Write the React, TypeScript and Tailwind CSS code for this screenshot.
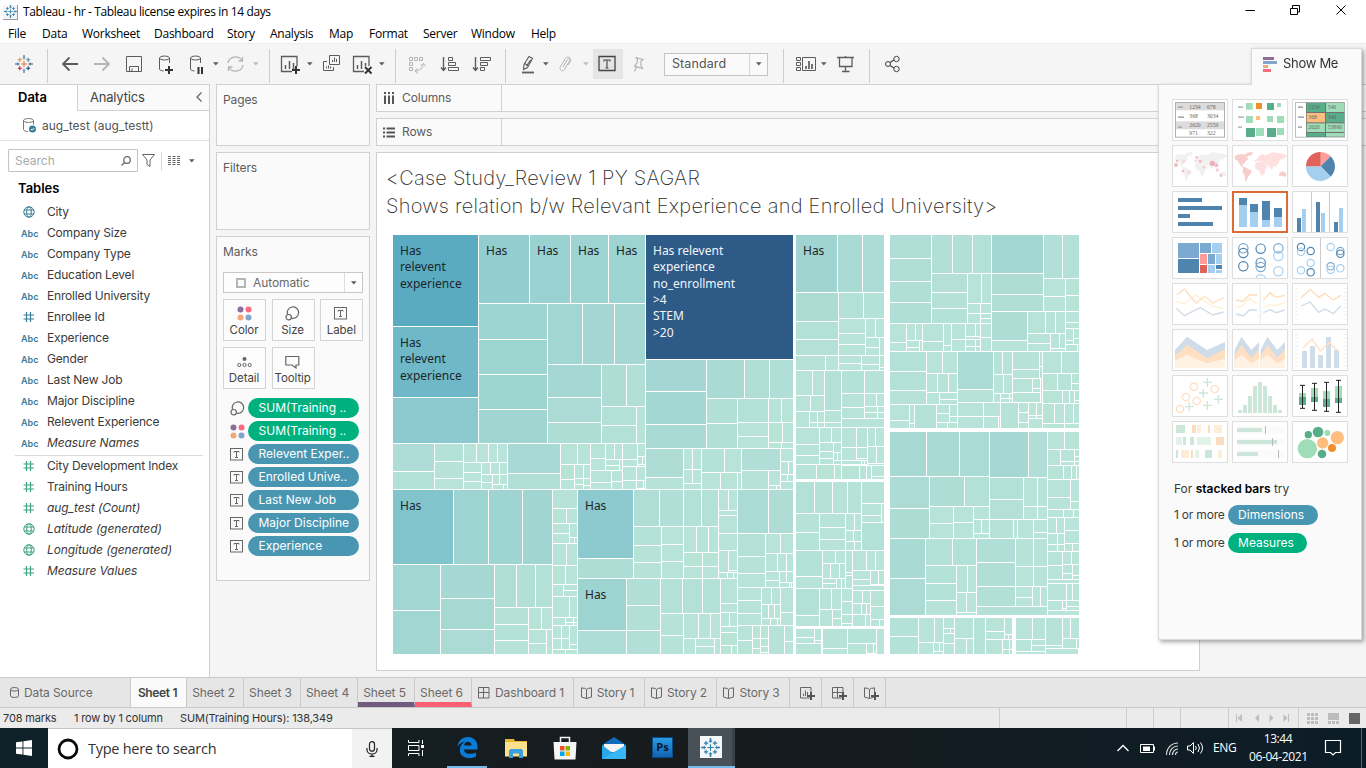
import React from "react";

/* ---------- treemap geometry: "h y0 y1 x..." is a row of cells, "v x0 x1 y..." a column ---------- */
const CELLS = `v 393 479 235 327 398 444;h 235 304 479 530 571 609 646;v 479 548 304 340 375 410 444;h 304 365 548 583 615 646;v 548 602 365 398 423 444;h 365 407 602 627 646;v 602 637 407 426 444;v 637 646 407 444
v 393 435 444 472 490;v 435 464 444 462 479 490;h 444 463 464 477 489 498 508;v 464 482 463 473 482 490;h 463 475 482 491 500 508;v 482 493 475 483 490;h 475 485 493 500 508;h 485 490 493 504 508
v 508 561 444 474 490;h 444 465 561 578 591;v 561 575 465 480 490;v 575 584 465 479 485 490;v 584 591 465 479 486 490;v 591 606 444 459 471;v 591 612 471 483 490;v 612 623 471 482 490
h 444 460 606 615 623;v 606 620 460 466 471;v 620 623 460 471;v 623 638 444 460 467;v 623 637 467 481 490;v 638 646 444 457;h 457 465 638 643 646;v 638 646 465 467;v 637 646 467 481;h 481 489 637 644 646
h 490 565 393 454 489 523 553;v 393 441 565 611 655;v 441 495 565 599 630 655;h 565 608 495 517 536 553;v 495 529 608 625 641 655;h 608 630 529 542 553;v 529 547 630 644 655;v 547 553 630 655
v 553 578 490 509;h 509 524 553 567 578;v 553 570 524 534 544;v 570 578 524 538;h 538 544 570 575 578;h 544 566 553 567 578;h 566 585 553 566 578;v 553 564 585 597;v 564 578 585 591 597;h 597 618 553 570 578
v 553 566 618 626;v 566 574 618 623 626;v 574 578 618 623 626;h 626 639 553 562 570;h 639 650 553 562 570;v 570 578 626 645 650;h 650 655 553 566 578
v 578 634 490 559 579;h 490 527 634 660 684;v 634 662 527 546 563 579;v 662 684 527 545 562 579;v 578 627 579 631 655;v 627 661 579 606 631 655
h 490 527 684 702 719;h 490 511 719 729 738;v 719 738 511 516 534 551;h 527 553 684 697 709 719;v 684 703 553 567 579;v 703 719 553 567 579;v 719 729 551 573;v 729 738 551 571 573;h 573 579 719 728 734 738
h 490 534 738 769 794;v 738 766 534 557 574 588;h 534 554 766 781 794;h 554 572 766 778 787 794;v 766 780 572 581 588;h 572 583 780 787 794;h 583 588 780 790 792 794
h 579 614 661 683 703 721;v 661 684 614 636 655;h 614 639 684 699 711 721;v 684 696 639 655;v 696 715 639 647 655;v 715 721 639 655;v 721 738 579 604 613;h 613 627 721 730 738;v 721 738 627 633 646;h 646 655 721 732 738
v 738 762 588 601 614 626;h 588 605 762 772 781;h 605 619 762 769 775 781;h 619 626 762 771 778 781;v 781 794 588 613 626;v 738 753 626 641 655;h 626 639 753 761 769;v 753 761 639 649 655;v 761 769 639 647 653 655;v 769 785 626 655;v 785 794 626 642 655
v 646 794 235 360;v 646 707 360 392 425 449;h 360 399 707 745 770 794;v 707 738 399 424 449;v 738 769 399 423 437 449;h 399 423 769 782 794;h 423 443 769 783 794;h 443 449 769 782 794
v 646 684 449 478 490;h 449 470 684 693 702;h 470 484 684 693 702;v 684 702 484 490;h 449 473 702 725 742;h 473 490 702 721 738 742;v 742 781 449 471;v 742 769 471 490;v 769 781 471 486;h 486 490 769 777 781;v 781 794 449 462;h 462 475 781 789 794;h 475 482 781 788 794;v 781 794 482 490
h 235 293 796 838 863 885;v 796 839 293 322 340 356;h 293 319 839 864 885;v 839 866 319 334 345 356;h 319 338 866 876 885;v 866 880 338 348 356;v 880 885 338 356;h 356 371 796 826 839;v 839 862 356 364 371;v 862 880 356 365 371;v 880 885 356 368 371
h 371 396 796 813 825;h 396 412 796 811 825;v 796 810 412 428;h 412 423 810 818 825;h 423 428 810 818 825;v 825 842 371 411 423 428;h 371 394 842 865 885;v 842 865 394 408 419;h 394 407 865 877 885;h 407 413 865 878 885;h 413 419 865 878 885;v 842 885 419 428
v 796 820 428 445 456 465;h 428 443 820 832 842;v 820 834 443 452 459 465;v 834 842 443 453;h 453 461 834 838 842;v 834 842 461 465;h 428 448 842 857 868;v 842 857 448 461;v 857 868 448 459 461;h 461 465 842 862 865 868;h 428 447 868 876 885;h 447 464 868 877 885;v 868 885 464 466
h 465 480 796 817 835 842;h 466 480 842 860 867 872;v 872 885 466 477 480
h 482 514 796 815 833 848 862;v 862 885 482 504;v 862 882 504 516 523;v 882 885 504 523;v 862 885 523 551;v 796 820 514 533 551;v 820 846 514 528 540 551;h 514 531 846 855 862;h 531 542 846 854 862;h 542 551 846 855 862
v 796 823 551 577 589;h 551 564 823 836 846;h 564 579 823 831 840 846;v 823 837 579 584 589;h 579 589 837 842 846;v 846 853 551 573 576 589;h 551 571 853 867 876 885;v 853 871 571 580 586;h 571 585 871 879 885;v 853 885 586 591
v 796 820 589 616 627;h 589 610 820 832 842;v 820 833 610 627;v 833 842 610 619 627;v 842 853 589 602 615 624 627;h 591 604 853 863 871;h 604 615 853 862 867 871;h 615 627 853 866 871;v 871 885 591 607 620;h 620 627 871 880 885
v 796 815 629 638 644;v 815 822 629 641 644;v 796 822 644 655;v 823 848 629 649 655;v 848 877 629 644;v 848 867 644 655;h 644 654 867 874 877;v 877 885 629 655
v 890 932 235 259 282 303 324;h 235 274 932 953 973 992;v 932 968 274 293 309 324;h 274 304 968 982 992;v 968 981 304 314 324;v 981 992 304 314 319 324;v 992 1044 235 274 295 312;h 235 279 1044 1063 1080;v 1044 1066 279 297 312;v 1066 1080 279 296 312
v 992 1028 312 341 352;h 312 334 1028 1046 1056 1066;v 1028 1051 334 344 352;h 334 349 1051 1060 1066;v 1051 1066 349 352;v 1066 1080 312 323 329;v 1066 1074 329 341 345;v 1074 1080 329 339 345;h 345 352 1066 1078 1080
v 890 907 324 343 352;h 324 341 907 916 923;v 907 920 341 348 352;v 920 923 341 352;v 923 944 324 342 352;v 944 952 324 346 352;v 952 966 324 340 352;h 324 337 966 976 981;v 966 981 337 340;h 340 347 966 976 981;h 347 352 966 976 981;v 981 992 324 338 352
v 890 927 352 372 391 405;h 352 374 927 943 958;h 374 393 927 938 949 958;v 927 940 393 405;v 940 958 393 400 405;v 890 910 405 421 429;v 910 915 405 424 429;v 915 937 405 429;v 937 950 405 414 423;v 950 958 405 417 423;h 423 429 937 948 958
v 958 994 352 390 403;h 352 375 994 1003 1013;h 375 394 994 1004 1013;v 994 1001 394 403;v 1001 1010 394 399 403;v 1010 1013 394 399 403;v 1013 1040 352 370 379;v 1040 1043 352 367 379;v 1013 1033 379 393;v 1033 1041 379 389 393;v 1013 1041 393 403;v 1041 1043 379 403
v 958 984 403 417 429;v 984 1001 403 417;h 417 429 984 999 1001;v 1001 1019 403 429;v 1019 1029 403 413 423 429;h 403 416 1029 1037 1043;h 416 419 1029 1037 1043;v 1029 1043 419 429
h 352 374 1043 1062 1080;h 374 391 1043 1058 1072;v 1072 1080 374 384 391;h 391 404 1043 1063 1070 1075;v 1075 1080 391 401 404;h 404 424 1043 1055 1065 1074 1080;h 424 429 1043 1065 1080
h 432 477 890 927 960 990;h 432 478 990 1029 1048;v 890 930 477 509 539;h 477 507 930 965 990;v 930 954 507 524 539;v 954 974 507 523 539;v 974 990 507 520;h 520 534 974 982 990;v 974 990 534 539
v 990 1024 478 500 520;h 478 507 1024 1038 1048;h 507 520 1024 1038 1048;h 520 539 990 1014 1018 1034;v 1034 1048 520 533 539;v 890 926 539 579 616;h 539 566 926 953 977;v 926 957 566 584 601 616;h 566 593 957 968 977;h 593 613 957 967 977;v 957 977 613 616
v 977 1016 539 563 587 607;h 539 567 1016 1034 1048;h 567 587 1016 1034 1048;v 1016 1033 587 598 607;h 587 607 1033 1041 1048;v 977 1048 607 616
h 432 450 1048 1065 1080;v 1048 1061 450 466;v 1061 1075 450 462 466;v 1075 1080 450 457 462 466;h 466 480 1048 1064 1072 1077 1080;v 1048 1071 480 498 510;v 1071 1080 480 502 510;h 510 518 1048 1064 1074 1080;h 518 534 1048 1057 1065;h 534 545 1048 1058 1065;h 545 552 1048 1058 1065;v 1065 1080 518 531 544;h 544 552 1065 1073 1080
v 1048 1063 552 566 580;h 552 565 1063 1072 1080;v 1063 1073 565 574 580;v 1073 1080 565 576 580;v 1048 1080 580 584;h 584 601 1048 1067 1073 1080;v 1048 1063 601 611;v 1063 1067 601 609 611;v 1067 1080 601 607 611;v 1048 1080 611 616
v 890 919 618 637 655;h 618 643 919 935 944;v 919 934 643 655;h 643 652 934 940 944;v 934 944 652 655;v 944 955 618 629;h 629 634 944 951 955;v 944 955 634 644 655;v 955 974 618 639;h 639 655 955 967 974;v 974 986 618 655;v 986 1005 618 632 640;v 986 1003 640 655;v 1005 1013 618 635;h 635 640 1005 1009 1013;h 640 650 1003 1010 1013;h 650 655 1003 1010 1013
h 618 640 1016 1033 1046;v 1016 1032 640 652;v 1032 1046 640 646 652;v 1016 1046 652 655;v 1046 1063 618 646 649;h 618 639 1063 1071 1080;h 639 649 1063 1077 1080;v 1046 1079 649 655`;

const STOPS: [number, number[]][] = [
  [0, [185, 229, 217]],
  [350, [183, 227, 216]],
  [1000, [175, 221, 214]],
  [1700, [166, 216, 211]],
  [2400, [158, 212, 209]],
  [3400, [147, 205, 208]],
  [4500, [129, 195, 204]],
  [5900, [112, 184, 199]],
  [7700, [90, 171, 193]],
  [18400, [45, 89, 134]],
];

function shade(area: number) {
  let i = 1;
  while (i < STOPS.length - 1 && area > STOPS[i][0]) i++;
  const [a0, c0] = STOPS[i - 1];
  const [a1, c1] = STOPS[i];
  const t = Math.min(1, (area - a0) / (a1 - a0));
  return `rgb(${c0.map((c, k) => Math.round(c + (c1[k] - c) * t)).join(",")})`;
}

type Cell = { x: number; y: number; w: number; h: number };
const cells: Cell[] = CELLS.split(/[;\n]/).flatMap((line) => {
  const [kind, ...rest] = line.trim().split(" ");
  const [a, b, ...e] = rest.map(Number);
  return e.slice(1).map((end, i) =>
    kind === "h"
      ? { x: e[i], y: a, w: end - e[i] - 1, h: b - a - 1 }
      : { x: a, y: e[i], w: b - a - 1, h: end - e[i] - 1 }
  );
});

const LABELS: { x: number; y: number; lines: string[]; light?: boolean }[] = [
  { x: 400, y: 255, lines: ["Has", "relevent", "experience"] },
  { x: 400, y: 347, lines: ["Has", "relevent", "experience"] },
  { x: 486, y: 255, lines: ["Has"] },
  { x: 537, y: 255, lines: ["Has"] },
  { x: 578, y: 255, lines: ["Has"] },
  { x: 616, y: 255, lines: ["Has"] },
  { x: 803, y: 255, lines: ["Has"] },
  { x: 400, y: 510, lines: ["Has"] },
  { x: 585, y: 510, lines: ["Has"] },
  { x: 585, y: 599, lines: ["Has"] },
  { x: 653, y: 255, lines: ["Has relevent", "experience", "no_enrollment", ">4", "STEM", ">20"], light: true },
];

function Treemap() {
  return (
    <svg width="688" height="420" viewBox="393 235 688 420" className="ml-4 block shrink-0">
      <g shapeRendering="crispEdges">
        {cells.map((c, i) => (
          <rect key={i} x={c.x} y={c.y} width={c.w} height={c.h} fill={shade(c.w * c.h)} />
        ))}
      </g>
      {LABELS.map((l, i) =>
        l.lines.map((t, k) => (
          <text key={`${i}-${k}`} x={l.x} y={l.y + Math.round(k * 16.3)} fill={l.light ? "#f2f5f8" : "#1c2628"} className="font-['Noto_Sans',sans-serif] text-[12px]">
            {t}
          </text>
        ))
      )}
    </svg>
  );
}

/* ---------- icons ---------- */
type IcoProps = { x: number; y?: number; w: number; h?: number; className?: string; c?: string; children?: React.ReactNode };
function Ico({ x, y = 54, w, h = 20, className = "", c = "#5c5c5c", children }: IcoProps) {
  return (
    <svg width={w} height={h} viewBox={`${x} ${y} ${w} ${h}`} fill="none" stroke={c} className={`shrink-0 overflow-visible ${className}`}>
      {children}
    </svg>
  );
}
const Caret = ({ className = "", c = "#5c5c5c" }: { className?: string; c?: string }) => (
  <svg width="6" height="4" viewBox="0 0 6 4" className={`shrink-0 ${className}`}>
    <path d="M0 .3h5.600L2.800 3.600z" fill={c} />
  </svg>
);
const Sep = ({ className = "" }: { className?: string }) => <div className={`mt-1 h-[34px] w-px shrink-0 bg-[#cdcdcd] ${className}`} />;

const Hash = ({ c }: { c: string }) => (
  <svg width="12" height="12" viewBox="0 0 12 12" stroke={c} strokeWidth="1.2"><path d="M3.5 1v10M7.5 1v10M.5 4h10.500M.5 8h10.500" /></svg>
);
const Globe = ({ c }: { c: string }) => (
  <svg width="12" height="12" viewBox="0 0 12 12" stroke={c} fill="none"><circle cx="6" cy="6" r="5.200" /><ellipse cx="6" cy="6" rx="2.300" ry="5.200" /><path d="M1 4h10M1 8h10" /></svg>
);
const TBox = () => (
  <svg width="14" height="13" viewBox="0 0 14 13" fill="none" stroke="#666"><rect x=".5" y=".5" width="12" height="11.500" /><path d="M4 4.500V3.500h5v1M6.500 3.500v5.500M5 9.500h3" /></svg>
);
const SizeIco = () => (
  <svg width="15" height="15" viewBox="0 0 15 15" fill="none" stroke="#666" strokeWidth="1.200"><path d="M2.600 8.500A5.700 5.700 0 1 1 7 12.200" /><circle cx="3.700" cy="11.200" r="2.700" /></svg>
);
const Dots = () => (
  <svg width="15" height="15" viewBox="0 0 15 15"><circle cx="3.500" cy="3.500" r="3" fill="#8a6d98" /><circle cx="11.500" cy="3.500" r="3" fill="#f96b80" /><circle cx="3.500" cy="11.500" r="3" fill="#f3a87c" /><circle cx="11.500" cy="11.500" r="3" fill="#83a5cd" /></svg>
);

function TableauMark({ size, mono }: { size: number; mono?: boolean }) {
  const pts: [number, number, number, string][] = [
    [9, 9, 3, "#e8762d"], [9, 3, 1.6, "#7199a6"], [9, 15, 1.6, "#7199c6"], [3, 9, 1.6, "#5b6591"], [15, 9, 1.6, "#5b6591"],
    [4.8, 4.8, 2, "#eb912b"], [13.2, 4.8, 2, "#59879b"], [4.8, 13.2, 2, "#c72035"], [13.2, 13.2, 2, "#1f447e"],
    [9, 1, 0.9, "#5b87b6"], [9, 17, 0.9, "#5b87b6"], [1, 9, 0.9, "#5b87b6"], [17, 9, 0.9, "#5b87b6"],
  ];
  return (
    <svg width={size} height={size} viewBox="0 0 18 18" className="shrink-0">
      {pts.map(([x, y, r, c], i) => (
        <path key={i} d={`M${x - r} ${y}h${2 * r}M${x} ${y - r}v${2 * r}`} stroke={mono ? "#2f7fad" : c} strokeWidth="1.100" />
      ))}
    </svg>
  );
}

const Db = ({ x }: { x: number }) => (
  <>
    <ellipse cx={x + 5.5} cy={58} rx={5} ry={2} />
    <path d={`M${x + 0.5} 58v11c0 1 1.500 1.800 4 2M${x + 10.5} 58v5`} />
  </>
);

const MENU = [
  ["File", "w-[34px]"], ["Data", "w-[40px]"], ["Worksheet", "w-[72px]"], ["Dashboard", "w-[73px]"], ["Story", "w-[43px]"], ["Analysis", "w-[59px]"],
  ["Map", "w-[40px]"], ["Format", "w-[54px]"], ["Server", "w-[48px]"], ["Window", "w-[60px]"], ["Help", "w-[40px]"],
];

function TitleAndMenu() {
  return (
    <header className="h-[43px] shrink-0 bg-white font-['Open_Sans','Noto_Sans',sans-serif] text-black">
      <div className="flex h-6 items-center pl-[3px]">
        <div className="flex size-[15px] items-center justify-center border-r border-b border-[#999] bg-[#f4f4f4]"><TableauMark size={13} mono /></div>
        <span className="ml-[5px] text-[12px] tracking-[-0.37px]">Tableau - hr - Tableau license expires in 14 days</span>
        <svg width="112" height="12" viewBox="1240 4 112 12" fill="none" stroke="#000" className="mr-[14px] -mt-1 ml-auto">
          <path d="M1245.500 10.500h9.500M1290.500 8.500h7v6h-7zM1292.500 8v-2.500h7v6.500h-2M1336.500 5.500l9 9M1345.500 5.500l-9 9" />
        </svg>
      </div>
      <nav className="flex pl-2 text-[12px] leading-5 tracking-[-0.25px]">
        {MENU.map(([m, w]) => <span key={m} className={`${w} whitespace-nowrap`}>{m}</span>)}
      </nav>
    </header>
  );
}

function Toolbar() {
  return (
    <div className="flex h-[41px] shrink-0 items-center border-t border-[#ececec] bg-[#f5f5f5] pl-[15px]">
      <TableauMark size={18} />
      <Sep className="ml-[14px]" />
      <Ico x={62} w={16} className="ml-[14px]"><path d="M78 64H63M69.500 57.500L63 64l6.500 6.500" strokeWidth="1.800" /></Ico>
      <Ico x={94} w={16} className="ml-4" c="#b4b4b4"><path d="M94 64h15M102.500 57.500L109 64l-6.500 6.500" strokeWidth="1.800" /></Ico>
      <Ico x={126} w={16} className="ml-4"><path d="M126.500 56.500h15v15h-15zM129.500 71v-4.500h9V71M132 68.500v3" /></Ico>
      <Ico x={159} w={14} className="ml-[17px]"><Db x={159} /><path d="M169 66v8M165 70h8" stroke="#333" strokeWidth="2" /></Ico>
      <Ico x={190} w={13} className="ml-[17px]"><Db x={190} /><path d="M198.500 67v7M202 67v7" stroke="#333" strokeWidth="2" /></Ico>
      <Caret className="ml-[10px]" />
      <Ico x={227} w={17} className="ml-2" c="#b4b4b4"><path d="M228 63a7.500 7 0 0 1 14-2.500M243 65a7.500 7 0 0 1-14 2.500M242.500 57v4h-4M228.500 71v-4h4" strokeWidth="1.300" /></Ico>
      <Caret className="ml-[9px]" c="#bbb" />
      <Sep className="ml-[10px]" />
      <Ico x={281} w={19} className="ml-[11px]"><path d="M297 66v-9.500h-15.500v15h10.500" strokeWidth="1.300" /><path d="M285.500 65v4M289.500 61v8M293.500 63v6" strokeWidth="1.500" /><path d="M296 66v8M292 70h8" stroke="#333" strokeWidth="2" /></Ico>
      <Caret className="ml-[7px]" />
      <Ico x={323} w={17} className="ml-[10px]"><path d="M329.500 55.500h10v9h-10zM327 61.500h-3.500v9h10V67M332.500 62v-2M334.500 62v-4.500M336.500 62v-3M326.500 68.500v-2M328.500 68.500v-3M330.500 68.500v-2" /></Ico>
      <Ico x={353} w={19} className="ml-[13px]"><path d="M369 66v-9.500h-15.500v15h10.500" strokeWidth="1.300" /><path d="M357.500 65v4M361.500 61v8M365.500 63v3" strokeWidth="1.500" /><path d="M365 67l6.500 6.500M371.500 67l-6.500 6.500" stroke="#333" strokeWidth="2" /></Ico>
      <Caret className="ml-[7px]" />
      <Sep className="ml-[10px]" />
      <Ico x={409} w={17} className="ml-[13px]" c="#b4b4b4"><path d="M409.500 57.500h3v3h-3zM414.500 57.500h3v3h-3zM419.500 57.500h3v3h-3zM409.500 62.500h3v3h-3zM409.500 67.500h3v3h-3zM415 71c5 0 8-3 8-7M420.500 66l2.500-2.500 3 2.500M418 68.500l-3 2.500 3 2.500" /></Ico>
      <Ico x={441} w={18} className="ml-[15px]"><path d="M443.500 57v13M441 67.500l2.500 3 2.500-3" strokeWidth="1.400" /><path d="M448.500 57.500h4v3h-4zM448.500 62.500h7v3h-7zM448.500 67.500h10v3h-10z" /></Ico>
      <Ico x={473} w={18} className="ml-[14px]"><path d="M475.500 57v13M473 67.500l2.500 3 2.500-3" strokeWidth="1.400" /><path d="M480.500 57.500h10v3h-10zM480.500 62.500h7v3h-7zM480.500 67.500h4v3h-4z" /></Ico>
      <Sep className="ml-[14px]" />
      <Ico x={521} w={14} className="ml-[15px]"><path d="M529 56.500l3.500 2-5 9-4 2 .5-5zM524.500 63.500l3.500 2M530.500 60l-4 6" strokeWidth="1.100" /><path d="M522 72.500h12" strokeWidth="1.800" /></Ico>
      <Caret className="ml-[8px]" />
      <Ico x={559} w={13} className="ml-[10px]" c="#b4b4b4"><path d="M563 67l4.500-7.500c1-1.500 3 0 2 1.500l-5 8.500c-1.500 2.500-6 .5-4-3l5-8c2-3 6.500-.5 5 2.500l-2.500 4" /></Ico>
      <Caret className="ml-[11px]" c="#bbb" />
      <div className="ml-1 flex size-[30px] items-center justify-center bg-[#e5e5e5]">
        <Ico x={600} w={18}><path d="M600 56.500h16v14h-16z" stroke="#444" strokeWidth="1.300" /><path d="M605 61.500v-1.500h6v1.500M608 60v8M606.500 68h3" stroke="#444" strokeWidth="1.100" /></Ico>
      </div>
      <Ico x={632} w={12} className="ml-[9px]" c="#b4b4b4"><path d="M635.500 57.500l7.500 2-2 1.500v4.500l1.500 3-8-2.500 2.500-3 .5-4zM636.500 66.500l-2 5" strokeWidth="1.200" /></Ico>
      <div className="ml-[20px] flex h-[23px] w-[104px] items-center border border-[#c4c4c4] bg-[#fafafa] pl-[7px] text-[12.500px] tracking-[0.1px] text-[#555]">
        <span className="w-[77px]">Standard</span>
        <div className="flex h-full flex-1 items-center justify-center border-l border-[#d4d4d4]"><Caret /></div>
      </div>
      <Sep className="ml-[15px]" />
      <Ico x={796} w={20} className="ml-3"><path d="M796.500 57.500h4v3h-4zM796.500 62.500h4v3h-4zM796.500 67.500h4v3h-4zM802.500 57.500h13v13h-13z" /><path d="M806 66v3M809 61v8M812 64v5" strokeWidth="1.700" /></Ico>
      <Caret className="ml-[5px]" />
      <Ico x={837} w={17} className="ml-[10px]"><path d="M837 57.500h17M839.500 57.500v9h12.500v-9M845.500 56v2M845.500 66.500v5M842 71.500h7.500" strokeWidth="1.300" /></Ico>
      <Sep className="ml-[15px]" />
      <Ico x={885} w={15} className="ml-[15px]" c="#444"><circle cx="888" cy="64" r="2.500" /><circle cx="896.500" cy="59" r="2.700" /><circle cx="896.500" cy="69" r="2.700" /><path d="M890 62.500l4-2.500M890 65.500l4 2.500" strokeWidth="1.300" /></Ico>
    </div>
  );
}

const DIMS: [string, string][] = [
  ["globe", "City"], ["abc", "Company Size"], ["abc", "Company Type"], ["abc", "Education Level"], ["abc", "Enrolled University"], ["hash", "Enrollee Id"],
  ["abc", "Experience"], ["abc", "Gender"], ["abc", "Last New Job"], ["abc", "Major Discipline"], ["abc", "Relevent Experience"], ["abc", "Measure Names"],
];
const MEAS: [string, string][] = [
  ["hash", "City Development Index"], ["hash", "Training Hours"], ["hash", "aug_test (Count)"], ["globe", "Latitude (generated)"], ["globe", "Longitude (generated)"], ["hash", "Measure Values"],
];

function Field({ kind, label, c, italic }: { kind: string; label: string; c: string; italic?: boolean }) {
  return (
    <div className="flex h-[21px] shrink-0 items-center pl-[21px] text-[12px] text-[#3a3a3a]">
      <div className="flex w-[26px] items-center">
        {kind === "abc" ? <span className="mt-0.5 text-[9px] font-semibold text-[#3b7c99]">Abc</span> : <span className="ml-0.5">{kind === "hash" ? <Hash c={c} /> : <Globe c={c} />}</span>}
      </div>
      <span className={italic ? "tracking-[-0.08px] italic" : "tracking-[-0.18px]"}>{label}</span>
    </div>
  );
}

function DataPane() {
  return (
    <aside className="flex w-[210px] shrink-0 flex-col border-t border-r border-[#d0d0d0] bg-white">
      <div className="flex h-[26px] shrink-0">
        <div className="w-[77px] pt-[3px] pl-[18px] text-[13px] font-semibold text-black">Data</div>
        <div className="flex flex-1 justify-between border-b border-l border-[#d0d0d0] bg-[#fafafa] pt-[3px] pr-[7px] pl-3 text-[13px] tracking-[-0.2px] text-[#444]">
          Analytics
          <svg width="6" height="10" viewBox="0 0 6 10" fill="none" stroke="#666" strokeWidth="1.300" className="mt-[4px]"><path d="M5.500 .5L1 5l4.500 4.500" /></svg>
        </div>
      </div>
      <div className="flex h-[30px] shrink-0 items-center border-b border-[#e0e0e0] pl-[23px] text-[12px] text-[#555]">
        <svg width="14" height="15" viewBox="0 0 14 15" fill="none" stroke="#777"><ellipse cx="5.500" cy="2.500" rx="5" ry="2" /><path d="M.5 2.500v9c0 1 2 2 4.500 2M10.500 2.500v4" /><circle cx="9.500" cy="11" r="3.500" fill="#3b7c99" stroke="none" /><path d="M8 11l1.200 1.200L11.300 10" stroke="#fff" /></svg>
        <span className="ml-[5px] tracking-[0.02px]">aug_test (aug_testt)</span>
      </div>
      <div className="mt-2 flex shrink-0 items-center pl-2">
        <div className="flex h-[23px] w-[130px] items-center justify-between rounded-[1px] border border-[#c4c4c4] pr-[6px] pl-[6px] text-[12px] text-[#aaa]">
          Search
          <svg width="10" height="10" viewBox="0 0 10 10" fill="none" stroke="#666" strokeWidth="1.200"><circle cx="6" cy="4" r="3.300" /><path d="M3.500 6.500L.5 9.500" /></svg>
        </div>
        <svg width="13" height="13" viewBox="0 0 13 13" fill="none" stroke="#666" className="ml-[4px]"><path d="M.5 .5h12L8 6v6.500l-3-2V6z" /></svg>
        <div className="ml-[6px] h-[18px] w-px bg-[#d4d4d4]" />
        <svg width="12" height="10" viewBox="0 0 12 10" stroke="#666" strokeWidth="1" className="ml-[6px]"><path d="M0 .5h12M0 2.500h12M0 4.500h12M0 6.500h12M0 8.500h12" strokeDasharray="3 1.500" /></svg>
        <Caret className="ml-[9px]" />
      </div>
      <div className="mt-[4px] h-[25px] shrink-0 pl-[18px] text-[13px] leading-6 font-semibold text-black">Tables</div>
      {DIMS.map(([k, l]) => <Field key={l} kind={k} label={l} c="#3b7c99" italic={l === "Measure Names"} />)}
      <div className="mt-[2px] mr-[6px] -mb-px ml-[15px] h-px shrink-0 bg-[#dcdcdc]" />
      {MEAS.map(([k, l], i) => <Field key={l} kind={k} label={l} c="#3fa37e" italic={i > 1} />)}
    </aside>
  );
}

const Pill = ({ children, green, className = "" }: { children: React.ReactNode; green?: boolean; className?: string }) => (
  <div className={`flex h-5 items-center overflow-hidden rounded-full pl-[10.500px] text-[12px] whitespace-nowrap text-white ${green ? "bg-[#00b180]" : "bg-[#4996b2]"} ${className}`}>{children}</div>
);

function MarkButton({ label, children }: { label: string; children: React.ReactNode }) {
  return (
    <div className="flex h-[42px] w-[43px] flex-col items-center justify-between border border-[#d4d4d4] bg-[#fcfcfc] pr-px pt-[5px] text-[11.500px] leading-[15px] tracking-[-0.1px] text-[#444]">
      <span className="flex h-[17px] items-center">{children}</span>
      <span className="pb-[2px]">{label}</span>
    </div>
  );
}

const SHELF: [string, string, boolean][] = [
  ["size", "SUM(Training ..", true], ["color", "SUM(Training ..", true], ["t", "Relevent Exper..", false], ["t", "Enrolled Unive..", false],
  ["t", "Last New Job", false], ["t", "Major Discipline", false], ["t", "Experience", false],
];

function Cards() {
  return (
    <section className="ml-[6px] flex w-[154px] shrink-0 flex-col gap-[6px] text-[12px] tracking-[-0.1px] text-[#5c5c5c]">
      <div className="h-[62px] shrink-0 border border-[#d0d0d0] bg-[#fafafa] pt-[6px] pl-[6px]">Pages</div>
      <div className="h-[78px] shrink-0 border border-[#d0d0d0] bg-[#fafafa] pt-[6px] pl-[6px]">Filters</div>
      <div className="h-[345px] shrink-0 border border-[#d0d0d0] bg-[#fafafa] px-[6px] pt-[6px]">
        <div className="h-[29px]">Marks</div>
        <div className="flex h-[21px] w-[140px] items-center border border-[#c8c8c8] bg-[#fdfdfd] pl-3 text-[#6a6a6a]">
          <div className="size-[10px] border-2 border-[#b5b5b5]" />
          <span className="ml-[7px] flex-1">Automatic</span>
          <div className="flex h-full w-[18px] items-center justify-center border-l border-[#ddd]"><Caret /></div>
        </div>
        <div className="mt-[6px] grid w-[140px] grid-cols-3 gap-x-[6px] gap-y-[6px]">
          <MarkButton label="Color"><Dots /></MarkButton>
          <MarkButton label="Size"><SizeIco /></MarkButton>
          <MarkButton label="Label"><TBox /></MarkButton>
          <MarkButton label="Detail">
            <svg width="15" height="12" viewBox="0 0 15 12" fill="none" stroke="#666"><circle cx="7.500" cy="3" r="2" fill="#666" stroke="none" /><circle cx="2.300" cy="9" r="1.600" /><circle cx="7.500" cy="9" r="1.600" /><circle cx="12.700" cy="9" r="1.600" /></svg>
          </MarkButton>
          <MarkButton label="Tooltip">
            <svg width="15" height="14" viewBox="0 0 15 14" fill="none" stroke="#666" strokeWidth="1.200"><path d="M.8 1.500h13v8.500h-2.800v3l-4-3H.8z" /></svg>
          </MarkButton>
        </div>
        <div className="mt-[9px] flex flex-col gap-[3px]">
          {SHELF.map(([k, l, g], i) => (
            <div key={i} className="flex h-5 items-center">
              <span className="flex w-[25px] justify-start pl-[7px]">{k === "size" ? <SizeIco /> : k === "color" ? <Dots /> : <TBox />}</span>
              <Pill green={g} className="w-[111px] tracking-normal">{l}</Pill>
            </div>
          ))}
        </div>
      </div>
    </section>
  );
}

function Worksheet() {
  const cols = <svg width="12" height="12" viewBox="0 0 12 12" stroke="#555" strokeWidth="2"><path d="M2 0v2M6 0v2M10 0v2M2 3.500v8.500M6 3.500v8.500M10 3.500v8.500" /></svg>;
  const rows = <svg width="12" height="11" viewBox="0 0 12 11" stroke="#555" strokeWidth="1.800"><path d="M0 1.500h2M0 5.500h2M0 9.500h2M3.500 1.500H12M3.500 5.500H12M3.500 9.500H12" /></svg>;
  return (
    <section className="ml-[6px] flex min-w-0 flex-1 flex-col gap-[6px] text-[12px] text-[#5c5c5c]">
      {[[cols, "Columns"], [rows, "Rows"]].map(([icon, label], i) => (
        <div key={i} className="flex h-7 shrink-0 border border-r-0 border-[#d0d0d0] bg-[#fafafa]">
          <div className="flex w-[125px] items-center gap-[7px] border-r border-[#d0d0d0] pl-[6px] tracking-[-0.08px]">{icon}{label}</div>
        </div>
      ))}
      <div className="h-[519px] w-[824px] shrink-0 border border-[#d0d0d0] bg-white">
        <h1 className="h-[82px] pt-[11px] pl-[9px] font-['Inter',sans-serif] text-[20px] leading-[28px] font-extralight tracking-[0.25px] whitespace-nowrap text-[#2b2b2b]">
          <span className="block">&lt;Case Study_Review 1 PY SAGAR</span>
          <span className="block">Shows relation b/w Relevant Experience and Enrolled University&gt;</span>
        </h1>
        <Treemap />
      </div>
    </section>
  );
}

/* ---------- Show Me thumbnails ---------- */
const D = "#4f84ae", L = "#a5cfef", G = "#58ad8b", LG = "#9fdcb8", O = "#f28e2b", LO = "#ffbe7d";
const R = (x: number, y: number, w: number, h: number, f: string) => <rect key={`${x}-${y}`} x={x} y={y} width={w} height={h} fill={f} />;
const Cs = (a: [number, number, number, string][], sw = 0) =>
  a.map(([x, y, r, f], i) => <circle key={i} cx={x} cy={y} r={r} fill={sw ? "none" : f} stroke={sw ? f : "none"} strokeWidth={sw} />);
const Tx = (x: number, y: number, t: string) => <text key={`${x}-${y}`} x={x} y={y} fill="#666" className="font-['Liberation_Serif',serif] text-[17px]">{t}</text>;
const WEST = "M58 200l8-6 14-2 10 2 6-6 14-2 4 4-8 8-6-2-4 6 4 6-8 6-4 6-5 2-1 6 6 3 5 6-6-1-9-7-6-10-6-8-6-3z";
const SOUTH = "M84 234l9-2 8 6 9 5-4 10-6 6-4 10-2 6-4-4-1-14-6-10z";
const EAST = "M128 206l4-8 9-6 8 4 12-4 12-6 12 3 18 2 14 5 0 5-8 1-5 8-4-4-6 4-2 8-6 6-3 7-5-4-5 6-2 7-6-8-5-6-8 1-4-7-6-2-5-5-8 0-8 2-6-2z";
const AFRICA = "M122 218l12-3 12 3 6 9 6 3-7 9-2 10-7 9-5-2-4-14-8-3-6-8z";
const AUS = "M192 250l9-6 9 2 5 9-4 6-8-4-10 1z";

const THUMBS: React.ReactNode[] = [
  <>{R(61, 37, 147, 24, "#dcdcdc")}{R(61, 94, 147, 24, "#dcdcdc")}<rect x="61.500" y="37.500" width="147" height="104" fill="none" stroke="#b0b0b0" strokeWidth="3" />{R(69, 49, 15, 5, "#aaa")}{R(69, 79, 18, 5, "#aaa")}{R(69, 109, 12, 5, "#aaa")}{Tx(103, 58, "1234")}{Tx(156, 58, "678")}{Tx(103, 85, "368")}{Tx(156, 85, "3034")}{Tx(103, 112, "2620")}{Tx(156, 112, "2559")}{Tx(103, 136, "971")}{Tx(156, 136, "322")}</>,
  <>{R(249, 49, 15, 5, "#bbb")}{R(249, 79, 18, 5, "#bbb")}{R(249, 109, 12, 5, "#bbb")}{R(273, 39, 20, 20, LG)}{R(303, 39, 18, 18, O)}{R(336, 39, 21, 21, G)}{R(366, 39, 12, 12, LG)}{R(273, 78, 21, 21, LG)}{R(303, 78, 12, 12, LO)}{R(336, 78, 18, 18, LG)}{R(366, 78, 21, 21, LG)}{R(273, 114, 27, 27, G)}{R(303, 114, 24, 24, LG)}{R(336, 114, 27, 27, G)}{R(366, 114, 21, 21, LG)}</>,
  <>{R(420, 36, 150, 107, "#bdbdbd")}{R(453, 38, 115, 103, "#707070")}{R(423, 39, 30, 101, "#fff")}{R(429, 49, 15, 5, "#aaa")}{R(429, 79, 18, 5, "#aaa")}{R(429, 109, 12, 5, "#aaa")}{R(455, 39, 55, 27, G)}{R(513, 39, 55, 27, LG)}{R(455, 69, 55, 28, LO)}{R(513, 69, 55, 28, G)}{R(455, 100, 55, 26, LG)}{R(513, 100, 55, 26, LG)}{R(455, 129, 55, 11, G)}{R(513, 129, 55, 11, LG)}{Tx(460, 57, "1234")}{Tx(518, 57, "546")}{Tx(460, 88, "368")}{Tx(518, 88, "340")}{Tx(460, 118, "2620")}{Tx(518, 118, "53890")}</>,
  <><path d={WEST + SOUTH + EAST + AFRICA + AUS} fill="#f1f1f1" />{Cs([[63, 225, 6, "#f0bcc3"], [66, 213, 4, "#f0bcc3"], [86, 214, 5, "#fad6d8"], [125, 202, 5, "#f5c9cd"], [136, 214, 5, "#f0bcc3"], [123, 213, 4, "#fad6d8"], [84, 243, 4, "#f0bcc3"], [102, 247, 5, "#fad6d8"], [147, 232, 4, "#f5c9cd"], [172, 220, 8, "#eab0b9"], [184, 226, 6, "#f0bcc3"], [187, 240, 5, "#f8cfd2"], [198, 257, 4, "#f0bcc3"]])}</>,
  <g transform="translate(180 0)"><path d={EAST + AFRICA} fill="#fde0df" /><path d={WEST + SOUTH + AUS} fill="#f6cfcd" /></g>,
  <><path d="M497 229V186a43 43 0 0 1 30 13z" fill="#ff9d9a" /><path d="M497 229l30-30a43 43 0 0 1 0 61z" fill={D} /><path d="M497 229l30 31a43 43 0 0 1-74-31z" fill={L} /><path d="M497 229h-44a43 43 0 0 1 44-43z" fill="#e1625a" /></>,
  <>{R(69, 324, 72, 12, D)}{R(69, 348, 132, 12, D)}{R(69, 372, 36, 12, D)}{R(69, 396, 105, 12, D)}</>,
  <>{R(252, 324, 24, 21, D)}{R(252, 345, 24, 66, L)}{R(285, 342, 24, 24, D)}{R(285, 366, 24, 45, L)}{R(321, 333, 24, 57, D)}{R(321, 390, 24, 21, L)}{R(357, 354, 24, 27, D)}{R(357, 381, 24, 30, L)}</>,
  <>{R(468, 306, 3, 120, "#ccc")}{R(522, 306, 3, 120, "#ccc")}{R(426, 384, 12, 42, D)}{R(441, 357, 12, 69, L)}{R(483, 336, 12, 90, D)}{R(498, 369, 12, 57, L)}{R(537, 396, 12, 30, D)}{R(552, 354, 12, 72, L)}</>,
  <>{R(69, 459, 63, 45, "#7ba9cf")}{R(69, 507, 63, 42, D)}{R(135, 459, 33, 30, "#7ba9cf")}{R(171, 459, 30, 30, L)}{R(135, 492, 21, 30, "#ff9d9a")}{R(159, 492, 21, 30, "#7ba9cf")}{R(183, 492, 18, 30, L)}{R(135, 525, 21, 24, "#e1625a")}{R(159, 525, 21, 24, L)}{R(183, 525, 18, 12, D)}{R(183, 540, 18, 9, L)}</>,
  Cs([[265, 475, 14, "#7ba9cf"], [265, 489, 14, D], [265, 529, 14, D], [317, 476, 14, D], [317, 518, 14, D], [317, 531, 14, "#7ba9cf"], [317, 568, 14, L], [370, 475, 14, "#7ba9cf"], [370, 498, 14, L], [370, 544, 14, L]], 3.5),
  <>{R(495, 444, 3, 120, "#ccc")}{Cs([[438, 471, 11, D], [438, 485, 11, L], [467, 483, 11, D], [467, 519, 11, L], [438, 541, 11, L], [467, 547, 11, D], [527, 471, 11, L], [556, 483, 11, "#7ba9cf"], [556, 491, 11, D], [527, 529, 11, "#7ba9cf"], [527, 539, 11, L], [556, 535, 11, L]], 3.5)}</>,
  <g fill="none" strokeWidth="4"><path d="M64 634l24 7 35-26 25 18 28 17 30 5" stroke="#fff0d3" /><path d="M66 615l22-18 35 42 25-20 25 20 33-16" stroke="#ffe0c0" /><path d="M64 655l24 22 48-24 38 22 32-9" stroke="#cfdce9" /></g>,
  <g fill="none" strokeWidth="4"><path d="M243 630l22 4 18-19h23M325 630l20-22 18 14 26-6" stroke="#ffdcb9" /><path d="M243 652l20-4 20-22 22 14M325 652l20-8 18 3 26-10" stroke="#fff0d3" /><path d="M243 672l22 6 18-18h23M325 668l20-9 18 9 26-8" stroke="#cfdce9" /><path d="M316 582v120" stroke="#eee" /></g>,
  <g fill="none" strokeWidth="4"><path d="M438 624l27-26 26 24 18-12 26 20 22-14" stroke="#ffdcb9" /><path d="M438 648l27-12 26 31 18-10 26 14 22-23" stroke="#cfdce9" /><path d="M424 594v96M570 594v96" stroke="#ececec" strokeWidth="9" strokeDasharray="2.500 9" /></g>,
  <><path d="M60 780l36-40 60 40 54-24v78H60z" fill="#cfdce9" /><path d="M60 798l36-34 60 40 54-27v57H60z" fill="#ffdfc2" /><path d="M60 812l36-18 60 26 54-14v28H60z" fill="#fff2e4" /></>,
  <>{[0, 78].map((d) => <g key={d} transform={`translate(${d} 0)`}><path d="M239 780l20-40 30 40 23-24v78h-73z" fill="#cfdce9" /><path d="M239 798l20-34 30 40 23-27v57h-73z" fill="#ffdfc2" /><path d="M239 812l20-18 30 26 23-14v28h-73z" fill="#fff2e4" /></g>)}</>,
  <>{R(441, 783, 15, 51, "#cfdce9")}{R(465, 768, 15, 66, "#cfdce9")}{R(489, 795, 15, 39, "#cfdce9")}{R(513, 741, 15, 93, "#cfdce9")}{R(537, 780, 15, 54, "#cfdce9")}<path d="M444 774l27-27 25 36 26-25 28 26" fill="none" stroke="#ffdfc2" strokeWidth="4" /><path d="M424 733v96M570 733v96" stroke="#ececec" strokeWidth="9" strokeDasharray="2.500 9" /></>,
  <>{Cs([[117, 890, 11, "#ffdfc2"], [179, 897, 11, "#ffdfc2"], [93, 921, 11, "#ffdfc2"], [125, 933, 11, "#ffdfc2"], [75, 957, 11, "#ffdfc2"]], 4)}<path d="M144 877h27M157 864v27M132 909h27M145 896v27M177 928h27M190 915v27M90 950h27M103 937v27M144 946h27M157 933v27" stroke="#cde6da" strokeWidth="4" /></>,
  <>{[960, 945, 918, 888, 876, 888, 918, 945, 960].map((y, i) => R(249 + i * 15, y, 12, 969 - y, "#cde6da"))}</>,
  <>{[[432, 909, 921, 945, 886, 955], [468, 894, 921, 936, 880, 961], [504, 903, 927, 951, 877, 964], [540, 888, 924, 939, 871, 967]].map(([x, a, b, c, t, e]) => <g key={x}>{R(x, a, 21, b - a, LG)}{R(x, b, 21, c - b, G)}<path d={`M${x + 3} ${t}h15M${x + 3} ${e}h15M${x + 10.5} ${t}V${e}`} stroke="#222" strokeWidth="3" /></g>)}</>,
  <>{R(63, 1005, 27, 24, "#cde6da")}{R(111, 1005, 12, 24, "#fcdcc0")}{R(126, 1005, 12, 24, "#ffecd8")}{R(159, 1005, 6, 24, "#fcdcc0")}{R(177, 1005, 24, 24, "#ffecd8")}{R(63, 1041, 18, 24, "#e2f3e9")}{R(84, 1041, 9, 24, "#cde6da")}{R(105, 1041, 12, 24, "#cde6da")}{R(126, 1041, 42, 24, "#e2f3e9")}{R(183, 1041, 24, 24, "#fcdcc0")}{R(63, 1080, 6, 24, "#cde6da")}{R(78, 1080, 24, 24, "#ffecd8")}{R(108, 1080, 6, 24, "#fcdcc0")}{R(120, 1080, 12, 24, "#e2f3e9")}{R(150, 1080, 21, 24, "#cde6da")}{R(189, 1080, 12, 24, "#ffecd8")}</>,
  <>{[[1008, 321, 330], [1044, 366, 351], [1080, 309, 369]].map(([y, e, m]) => <g key={y}>{R(246, y, 140, 24, "#fafafa")}{R(246, y + 6, e - 246, 12, "#cde6da")}{R(m, y, 3, 24, "#bbb")}</g>)}</>,
  Cs([[457, 1076, 29, LG], [460, 1034, 11, G], [489, 1026, 16, G], [517, 1029, 9, LG], [547, 1043, 20, LO], [503, 1059, 17, LO], [531, 1074, 12, O], [501, 1092, 13, G]]),
];

function ShowMe() {
  return (
    <div className="absolute top-12 right-1 z-10 flex w-[204px] flex-col items-end drop-shadow-[2px_2px_2px_rgba(0,0,0,0.35)]">
      <div className="relative z-10 flex h-[37px] w-[111px] items-center gap-[5px] border border-b-0 border-[#dadada] bg-[#fafafa] pb-[6px] pl-[11px] text-[13px] tracking-[-0.3px] text-[#333]">
        <svg width="15" height="15" viewBox="0 0 15 15"><path d="M0 0h11v3H0z" fill="#8b6f98" /><path d="M0 4h14v3H0z" fill="#83a5cd" /><path d="M0 8h5v3H0z" fill="#f3a87c" /><path d="M0 12h8v3H0z" fill="#f96b80" /></svg>
        Show Me
      </div>
      <div className="-mt-px h-[556px] w-[204px] border border-[#dadada] bg-[#fafafa] pt-[14px] pl-[13px] text-[12px] text-[#3a3a3a]">
        <div className="grid w-[176px] grid-cols-3 gap-1">
          {THUMBS.map((t, i) => {
            const vb = `${54 + (i % 3) * 180} ${30 + Math.floor(i / 3) * 138} 162 120`;
            return (
              <div key={i} className={`h-[42px] w-[56px] bg-white ${i === 7 ? "p-px outline-2 -outline-offset-2 outline-[#dd6b38]" : "border border-[#dedede]"}`}>
                <svg width="54" height="40" viewBox={vb} className="block">{t}</svg>
              </div>
            );
          })}
        </div>
        <div className="mt-[17px] pl-[2px] leading-[18px]">For <b className="font-semibold text-black">stacked bars</b> try</div>
        <div className="mt-[7px] flex items-center gap-[3px] pl-[2px] tracking-[-0.2px]">1 or more <Pill className="w-[90px] tracking-normal">Dimensions</Pill></div>
        <div className="mt-2 flex items-center gap-[3px] pl-[2px] tracking-[-0.2px]">1 or more <Pill green className="w-[79px] tracking-normal">Measures</Pill></div>
      </div>
    </div>
  );
}

const BookIco = () => <svg width="11" height="12" viewBox="0 0 11 12" fill="none" stroke="#666"><path d="M5.500 2.500v9M5.500 11.500L.5 10V.8l3 .7M5.500 11.500l5-1.500V.8l-3 .7M3.500 1l2 1.500 2-1.500" /></svg>;
const GridIco = () => <svg width="12" height="12" viewBox="0 0 12 12" fill="none" stroke="#666"><path d="M.5 .5h10.500v10.500H.5zM5.500 .5v10.500M.5 5.500h10.500" /></svg>;
const SheetIco = () => <svg width="12" height="12" viewBox="0 0 12 12" fill="none" stroke="#666"><path d="M.5 .5h10.500v10.500H.5zM3.500 9V6.500M5.500 9V3.500M7.500 9V5" /></svg>;

const TABS: [string, string, string, string][] = [
  ["Sheet 2", "w-[57px]", "", ""], ["Sheet 3", "w-[57px]", "", ""], ["Sheet 4", "w-[57px]", "", ""], ["Sheet 5", "w-[57px]", "border-b-[5px] border-b-[#6f5a80]", ""], ["Sheet 6", "w-[57px]", "border-b-[5px] border-b-[#fa6072]", ""],
  ["Dashboard 1", "w-[102px]", "", "grid"], ["Story 1", "w-[71px]", "", "book"], ["Story 2", "w-[72px]", "", "book"], ["Story 3", "w-[73px]", "", "book"],
];

function BottomTabs() {
  return (
    <div className="flex h-[31px] shrink-0 border-t border-b border-[#c9c9c9] bg-[#e6e6e6] text-[12px] tracking-[-0.1px] text-[#6a6a6a]">
      <div className="flex w-[130px] items-center gap-[5px] pl-[10px]">
        <svg width="9" height="11" viewBox="0 0 9 11" fill="none" stroke="#666"><ellipse cx="4.500" cy="2.300" rx="4" ry="1.800" /><path d="M.5 2.300v6.500c0 2.200 8 2.200 8 0V2.300" /></svg>
        Data Source
      </div>
      <div className="flex w-[57px] items-center justify-center border-r border-l border-[#c9c9c9] bg-[#fafafa] pr-[2px] font-semibold tracking-[-0.35px] text-[#444]">Sheet 1</div>
      {TABS.map(([l, w, u, ic]) => (
        <div key={l} className={`${w} ${u} border-r border-r-[#c9c9c9]`}>
          <div className="flex h-[29px] items-center justify-center gap-[5px] pr-[3px] whitespace-nowrap">{ic === "grid" ? <GridIco /> : ic === "book" ? <BookIco /> : null}{l}</div>
        </div>
      ))}
      {[<SheetIco />, <GridIco />, <BookIco />].map((ic, i) => (
        <div key={i} className="relative flex w-8 items-center justify-center border-r border-[#c9c9c9]">
          {ic}
          <svg width="8" height="8" viewBox="0 0 8 8" stroke="#555" strokeWidth="2" className="absolute top-[14px] left-[17px]"><path d="M4 0v8M0 4h8" /></svg>
        </div>
      ))}
    </div>
  );
}

function StatusBar() {
  return (
    <div className="flex h-5 shrink-0 items-center bg-[#ebebeb] pl-[3px] text-[11px] tracking-[-0.16px] text-[#333]">
      <span className="w-[71px]">708 marks</span>
      <span className="w-[106px]">1 row by 1 column</span>
      <span>SUM(Training Hours): 138,349</span>
      <div className="ml-auto flex h-full items-center">
        <div className="h-full w-[127px] border-l border-[#cdcdcd]" />
        <div className="h-full w-[27px] border-l border-[#cdcdcd]" />
        <div className="h-full w-[27px] border-l border-[#cdcdcd]" />
        <div className="h-full w-[48px] border-l border-[#cdcdcd]" />
        <div className="flex h-full w-[70px] items-center border-l border-[#cdcdcd] pl-[7px]">
          <svg width="56" height="8" viewBox="1236 0 56 8" fill="#bdbdbd"><path d="M1236 0h1v8h-1zM1242 0v8l-4.500-4zM1259 0v8l-4-4zM1269.500 0v8l4-4zM1283.500 0v8l4-4zM1288 0h1v8h-1z" /></svg>
        </div>
        <div className="flex h-full w-[68px] items-center border-l border-[#cdcdcd] pl-2">
          <svg width="54" height="11" viewBox="0 0 54 11" fill="#bdbdbd"><path d="M0 0h3v3H0zM4 0h3v3H4zM8 0h3v3H8zM0 4h3v3H0zM4 4h3v3H4zM8 4h3v3H8zM0 8h3v3H0zM4 8h3v3H4zM8 8h3v3H8zM21 0h11v7H21zM21 8h3v3h-3zM25 8h3v3h-3zM29 8h3v3h-3z" /><path d="M42 0h11v11H42z" fill="#666" /></svg>
        </div>
      </div>
    </div>
  );
}

function Taskbar() {
  return (
    <footer className="flex h-10 shrink-0 items-center bg-gradient-to-r from-[#10212a] via-[#171b1d] to-[#0c1d28] font-['Open_Sans','Noto_Sans',sans-serif] text-white">
      <div className="flex w-12 justify-center"><svg width="16" height="16" viewBox="0 0 16 16" fill="#fff"><path d="M0 2.300L6.500 1.400v6.200H0zM7.400 1.300L16 0v7.600H7.400zM0 8.400h6.500v6.200L0 13.700zM7.400 8.400H16V16l-8.600-1.300z" /></svg></div>
      <div className="flex h-full w-[344px] items-center border-t border-[#c5c5c5] bg-white pl-[9px]">
        <svg width="22" height="22" viewBox="0 0 22 22" fill="none" stroke="#0a0a0a" strokeWidth="2.800"><circle cx="11" cy="11" r="9" /></svg>
        <span className="ml-[9px] flex-1 text-[14.500px] tracking-[-0.27px] text-[#333]">Type here to search</span>
        <div className="flex h-full w-10 items-center justify-center bg-[#f2f2f2]">
          <svg width="12" height="16" viewBox="0 0 12 16" fill="none" stroke="#222" strokeWidth="1.200"><rect x="3.500" y=".7" width="5" height="9.500" rx="2.500" /><path d="M1 7v2a5 4 0 0 0 10 0V7M6 13v2.500M3.500 15.400h5" /></svg>
        </div>
      </div>
      <Ico x={408} y={740} w={17} h={16} c="#fff" className="ml-4"><path d="M408.500 740v2.500h10.500V740M408.500 756v-2.500h10.500v2.500M408.500 745.500h10.500v5h-10.500zM422.500 740v4M422.500 750v6" /><path d="M421 745h3v3h-3z" fill="#fff" stroke="none" /></Ico>
      <div className="ml-[22px] flex h-full w-10 items-center justify-center border-b-[2px] border-[#76b9ed]">
        <svg width="21" height="21" viewBox="0 0 21 21" fill="#0a7cd8"><path d="M.5 9.500C1.300 3.500 5.500 0 10.800 0 17 0 20.500 4.500 20.500 9.800v2.600H7c.2 5 7.300 5.500 12 3v4C13 22.500 3 21.500 2.800 13 2.800 9 5 6.300 8 5 5 5 2 7 .5 9.500zM7.200 8.500h7.300C14.500 3.500 7.600 3.500 7.200 8.500z" fillRule="evenodd" /></svg>
      </div>
      <svg width="22" height="19" viewBox="0 0 22 19" className="ml-[18px]"><path d="M0 2V0h9l1 2h12v15H0z" fill="#e8b738" /><path d="M0 3h22v14.500H0z" fill="#fce08c" /><path d="M4 19v-7q0-2 2-2h10q2 0 2 2v7h-4v-4.500H8V19z" fill="#3aa0dc" /></svg>
      <svg width="24" height="24" viewBox="0 0 24 24" className="ml-[26px]"><path d="M7.500 6V1.500h9V6" fill="none" stroke="#f5f5f5" strokeWidth="1.500" /><path d="M0.500 6h23l-1 17.500h-21z" fill="#f5f5f5" /><path d="M7 10h4.500v4.500H7z" fill="#f25022" /><path d="M12.500 10H17v4.500h-4.500z" fill="#7fba00" /><path d="M7 15.500h4.500V20H7z" fill="#00a4ef" /><path d="M12.500 15.500H17V20h-4.500z" fill="#ffb900" /></svg>
      <svg width="24" height="22" viewBox="0 0 24 22" className="ml-[25px]"><path d="M0 8L12 0l12 8v14H0z" fill="#0f6cbd" /><path d="M2 7h20v8H2z" fill="#f3f3f3" /><path d="M0 8l12 9L0 22z" fill="#2aa7ea" /><path d="M24 8v14H0z" fill="#38b6f4" /></svg>
      <div className="-mt-[2px] ml-[26px] flex size-[21px] items-center justify-center border border-[#0a4a86] bg-gradient-to-b from-[#2b9be6] to-[#1064b0] text-[11px] font-bold text-[#06182c]">Ps</div>
      <div className="ml-[15px] flex h-full w-11 items-center justify-center border-b-[2px] border-[#76b9ed] bg-[#475157] pl-px"><div className="flex h-[22px] w-[22px] items-center justify-center bg-[#f5f7f9]"><TableauMark size={19} mono /></div></div>
      <div className="h-full w-[3px] border-b-2 border-[#76b9ed] bg-[#394247]" />
      <div className="ml-auto flex h-full items-center">
        <Ico x={1117} y={740} w={12} h={16} c="#fff"><path d="M1117.500 751l5.500-5.500 5.500 5.500" strokeWidth="1.300" /></Ico>
        <Ico x={1140} y={740} w={15} h={16} c="#fff" className="ml-[11px]"><path d="M1140.500 744.500h13v8h-13zM1154.500 746.500v4" /><path d="M1143 746.500h7v4.500h-7z" fill="#fff" stroke="none" /></Ico>
        <Ico x={1166} y={740} w={12} h={16} c="#ddd" className="ml-[11px]"><path d="M1166.500 755c0-7 5-12 11.500-12M1169.500 755c0-5 3.500-9 8.500-9M1172.500 755c0-3 2-6 5.500-6M1175.500 755c0-1.500 1-3 2.500-3" strokeWidth="1.200" /></Ico>
        <Ico x={1187} y={740} w={17} h={16} c="#fff" className="ml-[9px]"><path d="M1187.500 746h2.500l3.500-3.500v11l-3.500-3.500h-2.500zM1195.500 746q1.500 2 0 4M1198 744q3 4 0 8M1200.500 742.500q4 5.500 0 11" /></Ico>
        <span className="ml-[9px] w-9 text-[12px] tracking-[-0.4px]">ENG</span>
        <div className="w-[58px] text-center text-[12px] leading-[18px] tracking-[-0.4px] whitespace-nowrap"><div>13:44</div><div>06-04-2021</div></div>
        <Ico x={1325} y={740} w={16} h={16} c="#fff" className="ml-[18px]"><path d="M1325.500 740.500h15v12h-5l-2.500 2.500-2.500-2.500h-5z" strokeWidth="1.200" /></Ico>
        <div className="ml-[20px] h-full w-[5px] border-l border-[#59656c]" />
      </div>
    </footer>
  );
}

export default function App() {
  return (
    <div className="relative flex h-[768px] w-[1366px] flex-col overflow-hidden bg-[#f5f5f5] font-['Inter',sans-serif]">
      <TitleAndMenu />
      <Toolbar />
      <main className="flex h-[593px] shrink-0">
        <DataPane />
        <Cards />
        <Worksheet />
      </main>
      <ShowMe />
      <BottomTabs />
      <StatusBar />
      <Taskbar />
    </div>
  );
}
